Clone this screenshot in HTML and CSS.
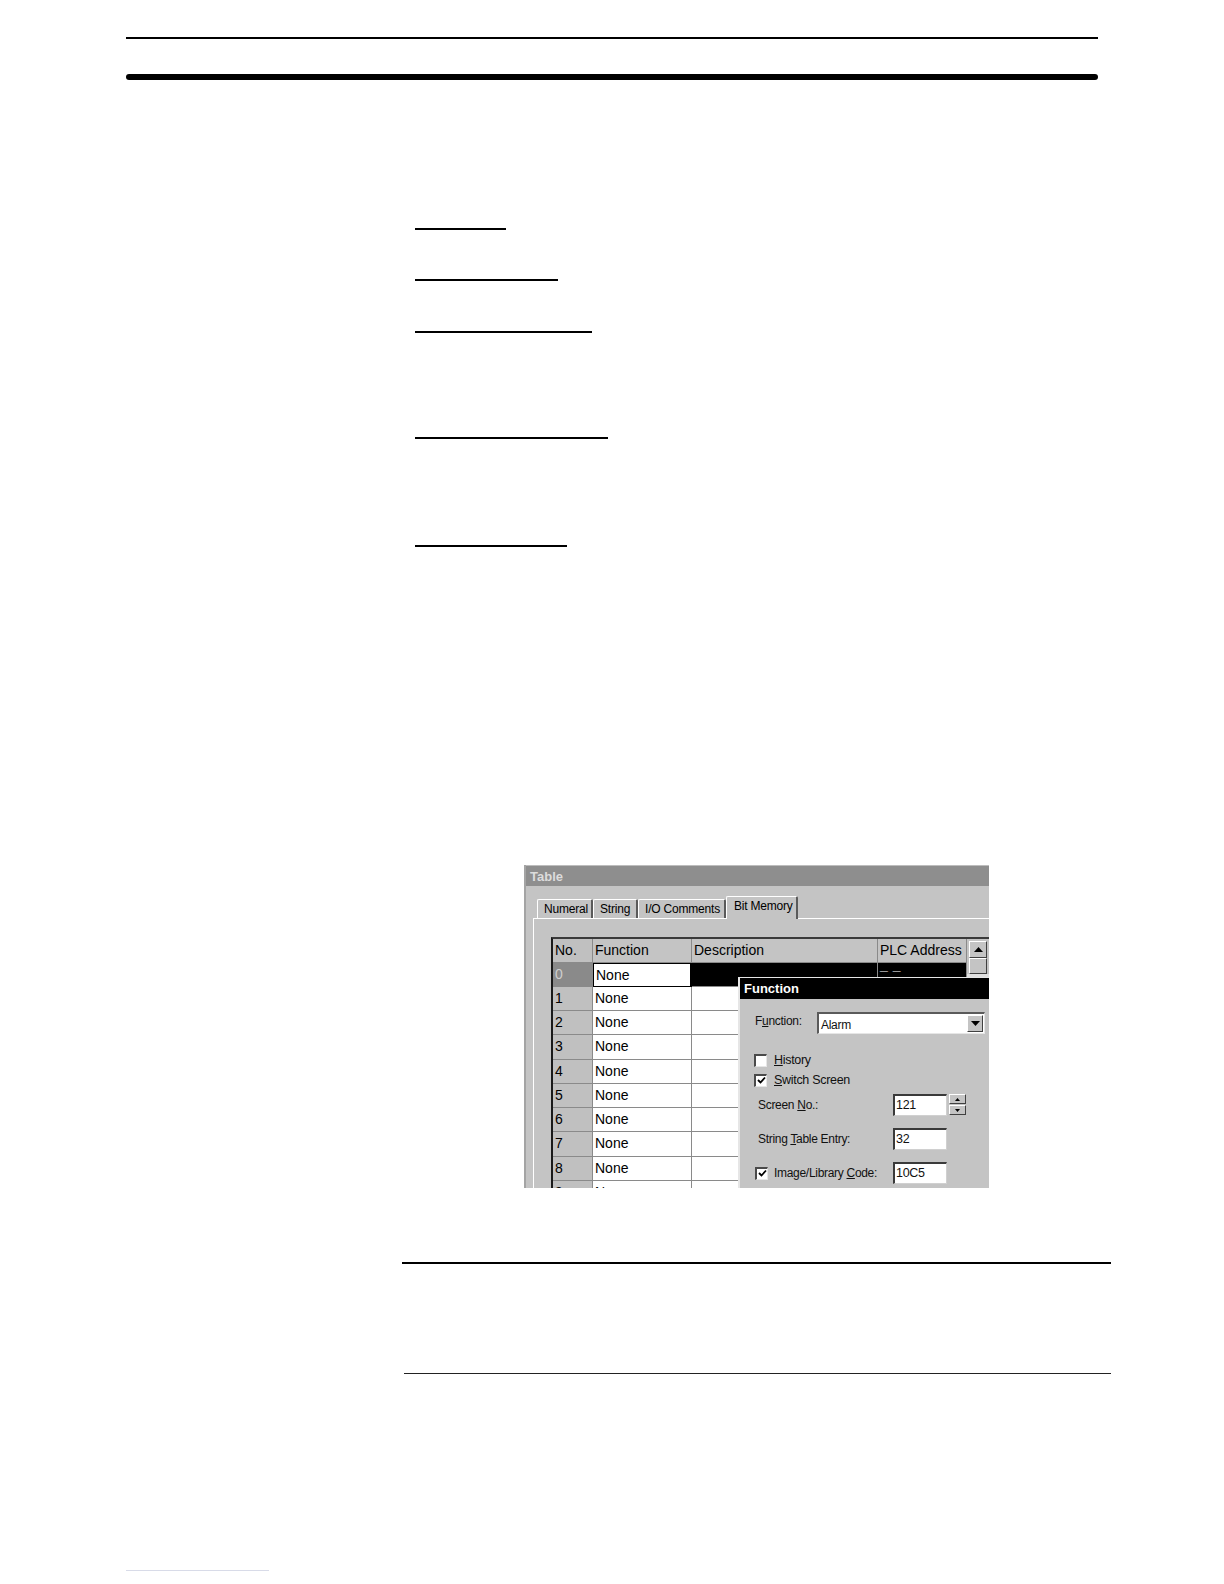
FILE: index.html
```html
<!DOCTYPE html>
<html>
<head>
<meta charset="utf-8">
<link rel="stylesheet" href="styles.css">
</head>
<body>
<div class="page">
  <div class="rule-thin"></div>
  <div class="rule-thick"></div>

  <div class="uline u1"></div>
  <div class="uline u2"></div>
  <div class="uline u3"></div>
  <div class="uline u4"></div>
  <div class="uline u5"></div>

  <div class="shot">
    <div class="titlebar">Table</div>
    <div class="tabs">
      <div class="tab t-num">Numeral</div>
      <div class="tab t-str">String</div>
      <div class="tab t-io">I/O Comments</div>
      <div class="tab t-bit active">Bit Memory</div>
    </div>
    <div class="panel">
      <div class="gridwrap">
        <div class="grid">
          <div class="c h no">No.</div><div class="c h">Function</div><div class="c h">Description</div><div class="c h">PLC Address</div>
          <div class="c no sel">0</div><div class="c fn focus">None</div><div class="c blk"></div><div class="c blk addr"><span class="addrtext">_ _</span></div>
          <div class="c no">1</div><div class="c fn">None</div><div class="c w"></div><div class="c w"></div>
          <div class="c no">2</div><div class="c fn">None</div><div class="c w"></div><div class="c w"></div>
          <div class="c no">3</div><div class="c fn">None</div><div class="c w"></div><div class="c w"></div>
          <div class="c no">4</div><div class="c fn">None</div><div class="c w"></div><div class="c w"></div>
          <div class="c no">5</div><div class="c fn">None</div><div class="c w"></div><div class="c w"></div>
          <div class="c no">6</div><div class="c fn">None</div><div class="c w"></div><div class="c w"></div>
          <div class="c no">7</div><div class="c fn">None</div><div class="c w"></div><div class="c w"></div>
          <div class="c no">8</div><div class="c fn">None</div><div class="c w"></div><div class="c w"></div>
          <div class="c no">9</div><div class="c fn">None</div><div class="c w"></div><div class="c w"></div>
        </div>
        <div class="scroll">
          <div class="sbtn"><svg width="9" height="5" viewBox="0 0 9 5"><path d="M0 5 L4.5 0 L9 5 Z" fill="#000"/></svg></div>
          <div class="thumb"></div>
          <div class="track"></div>
        </div>
      </div>
    </div>

    <div class="dialog">
      <div class="dtitle">Function</div>
      <div class="dbody">
        <div class="drow r-fn">
          <span class="lbl-fn">F<u>u</u>nction:</span>
          <div class="select">
            <span class="seltext">Alarm</span>
            <span class="dropbtn"><svg width="9" height="5" viewBox="0 0 9 5"><path d="M0 0 L9 0 L4.5 5 Z" fill="#000"/></svg></span>
          </div>
        </div>
        <div class="drow r-chk r-hist">
          <span class="chk"></span><span class="chklbl"><u>H</u>istory</span>
        </div>
        <div class="drow r-chk">
          <span class="chk"><svg width="9" height="9" viewBox="0 0 9 9"><path d="M1 4 L3.5 6.5 L8 1.5" stroke="#000" stroke-width="1.8" fill="none"/></svg></span><span class="chklbl"><u>S</u>witch Screen</span>
        </div>
        <div class="drow r-field r-scr">
          <span class="flbl">Screen <u>N</u>o.:</span>
          <span class="input">121</span>
          <span class="spin"><span class="sp"><svg width="5" height="3" viewBox="0 0 5 3"><path d="M0 3 L2.5 0 L5 3Z" fill="#000"/></svg></span><span class="sp"><svg width="5" height="3" viewBox="0 0 5 3"><path d="M0 0 L5 0 L2.5 3Z" fill="#000"/></svg></span></span>
        </div>
        <div class="drow r-field r-str">
          <span class="flbl">String <u>T</u>able Entry:</span>
          <span class="input">32</span>
        </div>
        <div class="drow r-field r-img">
          <span class="chk chk-img"><svg width="9" height="9" viewBox="0 0 9 9"><path d="M1 4 L3.5 6.5 L8 1.5" stroke="#000" stroke-width="1.8" fill="none"/></svg></span>
          <span class="flbl flbl-img">Image/Library <u>C</u>ode:</span>
          <span class="input">10C5</span>
        </div>
      </div>
    </div>
  </div>

  <div class="hr hr1"></div>
  <div class="hr hr2"></div>
  <div class="footline"></div>
</div>
</body>
</html>
```

FILE: styles.css
```css
html, body {
  margin: 0;
  padding: 0;
  background: #fff;
}
.page {
  width: 1224px;
  height: 1584px;
  display: flex;
  flex-direction: column;
  align-items: flex-start;
  font-family: "Liberation Sans", Arial, sans-serif;
}
.rule-thin {
  margin-top: 37px;
  margin-left: 126px;
  width: 972px;
  height: 2px;
  background: #000;
}
.rule-thick {
  margin-top: 35px;
  margin-left: 126px;
  width: 972px;
  height: 6px;
  border-radius: 3px;
  background: #000;
}
.uline {
  margin-left: 415px;
  height: 2px;
  background: #000;
}
.u1 { margin-top: 148px; width: 91px; }
.u2 { margin-top: 49px; width: 143px; }
.u3 { margin-top: 50px; width: 177px; }
.u4 { margin-top: 104px; width: 193px; }
.u5 { margin-top: 106px; width: 152px; }

/* ---------- screenshot ---------- */
.shot {
  margin-top: 318px;
  margin-left: 524px;
  width: 465px;
  height: 323px;
  overflow: hidden;
  position: relative;
  background: #c4c4c4;
  border-left: 2px solid #a4a4a4;
  box-sizing: border-box;
  font-family: "Liberation Sans", Arial, sans-serif;
  color: #000;
}
.titlebar {
  height: 21px;
  background: #8e8e8e;
  color: #dcdcdc;
  font-weight: bold;
  font-size: 13px;
  line-height: 21px;
  padding-left: 4px;
  border-top: 1px solid #bdbdbd;
  box-sizing: border-box;
}
.tabs {
  display: flex;
  align-items: flex-end;
  margin-top: 10px;
  margin-left: 11px;
  height: 22px;
}
.tab {
  height: 19px;
  box-sizing: border-box;
  border-top: 1px solid #fff;
  border-left: 1px solid #fff;
  border-right: 2px solid #5a5a5a;
  border-top-left-radius: 2px;
  border-top-right-radius: 2px;
  font-size: 12px;
  letter-spacing: -0.2px;
  line-height: 19px;
  padding-left: 6px;
  background: #c4c4c4;
}
.t-num { width: 56px; }
.t-str { width: 45px; }
.t-io { width: 88px; }
.t-bit { width: 72px; }
.tab.active {
  height: 23px;
  line-height: 19px;
  padding-left: 7px;
  margin-bottom: -1px;
  position: relative;
  z-index: 1;
}
.panel {
  margin-left: 7px;
  border-top: 1px solid #fff;
  border-left: 1px solid #fff;
  height: 280px;
  padding-top: 18px;
  padding-left: 17px;
}
.gridwrap {
  display: flex;
  align-items: flex-start;
}
.grid {
  display: grid;
  grid-template-columns: 40px 99px 186px 89px;
  grid-template-rows: 24px 24px 24px 24px 25px 24px 24px 24px 25px 24px 24px;
  border-top: 2px solid #3a3a3a;
  border-left: 2px solid #1a1a1a;
}
.c {
  box-sizing: border-box;
  border-right: 1px solid #8a8a8a;
  border-bottom: 1px solid #8a8a8a;
  font-size: 14px;
  line-height: 23px;
  padding-left: 2px;
  white-space: nowrap;
  overflow: hidden;
  background: #fff;
}
.c.h { background: #c4c4c4; }
.c.no { background: #c0c0c0; }
.c.sel { background: #8a8a8a; color: #cfcfcf; }
.c.focus { border: 1px solid #000; border-right: 2px solid #000; }
.c.blk { background: #000; color: #fff; }
.c.addr { padding-left: 2px; }
.addrtext {
  display: block;
  line-height: 14px;
  margin-top: -5px;
  font-weight: bold;
  letter-spacing: 0.5px;
}
.scroll {
  width: 24px;
  display: flex;
  flex-direction: column;
  border-top: 2px solid #3a3a3a;
}
.sbtn {
  height: 17px;
  width: 18px;
  margin-left: 2px;
  margin-top: 2px;
  box-sizing: border-box;
  border-top: 1px solid #fff;
  border-left: 1px solid #fff;
  border-right: 1px solid #404040;
  border-bottom: 1px solid #404040;
  background: #c4c4c4;
  display: flex;
  align-items: center;
  justify-content: center;
}
.thumb {
  height: 16px;
  width: 18px;
  margin-left: 2px;
  box-sizing: border-box;
  border-top: 1px solid #fff;
  border-left: 1px solid #fff;
  border-right: 1px solid #404040;
  border-bottom: 1px solid #404040;
  background: #c4c4c4;
}
.track {
  height: 200px;
  background: #e0e0e0;
}

/* ---------- dialog ---------- */
.dialog {
  position: absolute;
  left: 212px;
  top: 112px;
  width: 260px;
  height: 230px;
  background: #c4c4c4;
  border-left: 2px solid #e6e6e6;
  border-top: 1px solid #e6e6e6;
  box-sizing: border-box;
}
.dtitle {
  height: 21px;
  background: #000;
  color: #fff;
  font-weight: bold;
  font-size: 13px;
  line-height: 21px;
  padding-left: 4px;
}
.dbody {
  display: flex;
  flex-direction: column;
  font-size: 12px;
  letter-spacing: -0.3px;
  color: #111;
}
.drow {
  display: flex;
  align-items: center;
}
.r-fn {
  margin-top: 13px;
  height: 22px;
  padding-left: 15px;
}
.lbl-fn {
  width: 62px;
  margin-top: -4px;
}
.select {
  width: 168px;
  height: 22px;
  box-sizing: border-box;
  background: #fff;
  border-top: 2px solid #5a5a5a;
  border-left: 2px solid #5a5a5a;
  border-bottom: 1px solid #e6e6e6;
  border-right: 1px solid #e6e6e6;
  display: flex;
  align-items: center;
  justify-content: space-between;
}
.seltext { padding-left: 2px; margin-top: 2px; }
.dropbtn {
  width: 16px;
  height: 17px;
  margin-right: 1px;
  box-sizing: border-box;
  background: #c4c4c4;
  border-top: 1px solid #fff;
  border-left: 1px solid #fff;
  border-right: 1px solid #404040;
  border-bottom: 1px solid #404040;
  display: flex;
  align-items: center;
  justify-content: center;
}
.r-chk {
  height: 20px;
  padding-left: 14px;
}
.r-hist { margin-top: 16px; }
.chk {
  width: 13px;
  height: 13px;
  flex-shrink: 0;
  box-sizing: border-box;
  background: #fff;
  border-top: 2px solid #4a4a4a;
  border-left: 2px solid #4a4a4a;
  border-right: 1px solid #e6e6e6;
  border-bottom: 1px solid #e6e6e6;
  display: flex;
  align-items: center;
  justify-content: center;
  margin-right: 7px;
}
.chklbl { font-size: 12.5px; }
.r-field {
  height: 22px;
  padding-left: 18px;
}
.r-scr { margin-top: 4px; }
.r-str { margin-top: 12px; }
.r-img { margin-top: 12px; }
.flbl {
  width: 135px;
  flex-shrink: 0;
}
.chk-img { margin-left: -3px; margin-right: 6px; }
.flbl-img { width: 119px; }
.input {
  width: 54px;
  height: 22px;
  flex-shrink: 0;
  box-sizing: border-box;
  background: #fff;
  border-top: 2px solid #3a3a3a;
  border-left: 2px solid #3a3a3a;
  border-right: 1px solid #d0d0d0;
  border-bottom: 1px solid #d0d0d0;
  line-height: 19px;
  padding-left: 1px;
  font-size: 12.5px;
}
.spin {
  display: flex;
  flex-direction: column;
  margin-left: 2px;
  height: 22px;
}
.sp {
  width: 17px;
  height: 10px;
  box-sizing: border-box;
  background: #c4c4c4;
  border-top: 1px solid #fff;
  border-left: 1px solid #fff;
  border-right: 1px solid #404040;
  border-bottom: 1px solid #404040;
  display: flex;
  align-items: center;
  justify-content: center;
  margin-bottom: 1px;
}

/* ---------- lower rules ---------- */
.hr {
  height: 2px;
  background: #000;
}
.hr1 {
  margin-top: 74px;
  margin-left: 402px;
  width: 709px;
}
.hr2 {
  margin-top: 109px;
  margin-left: 404px;
  width: 707px;
  height: 1px;
  background: #222;
}
.footline {
  margin-top: 196px;
  margin-left: 126px;
  width: 143px;
  height: 1px;
  background: #d8dbe8;
}
```
